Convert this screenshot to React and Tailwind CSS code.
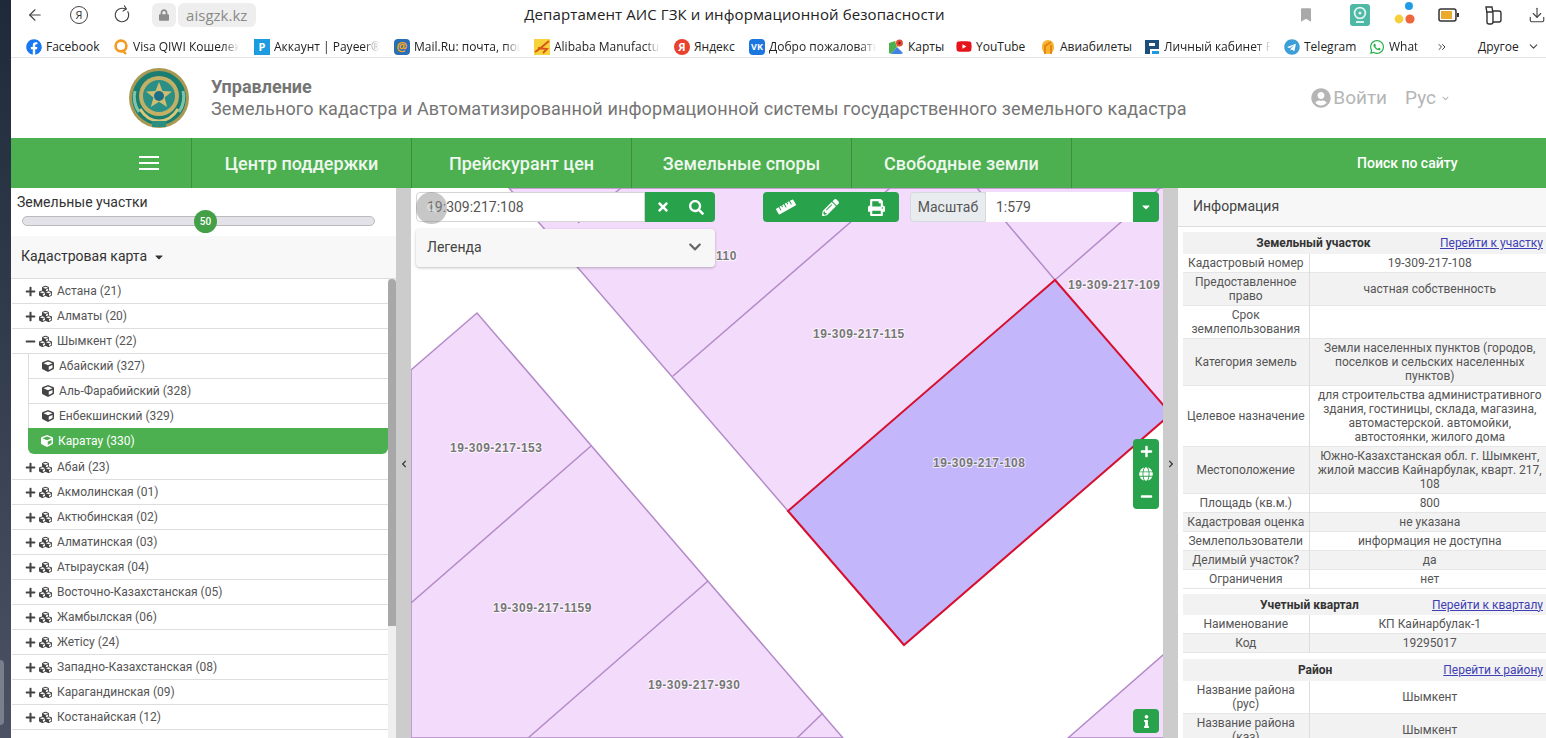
import { ArrowLeft, RotateCw, Download, ChevronDown, ChevronsRight } from "lucide-react";
import {
  FaPlus, FaMinus, FaCubes, FaCube, FaTimes, FaSearch, FaRuler, FaPencilAlt, FaPrint,
  FaCaretDown, FaGlobe, FaInfo, FaChevronLeft, FaChevronRight, FaChevronDown, FaUserCircle,
  FaLock, FaBookmark, FaFacebook, FaTelegram, FaWhatsapp, FaYoutube,
} from "react-icons/fa";

const bookmarks = [
  { label: "Facebook", w: 87, textW: 58, icon: "fb" },
  { label: "Visa QIWI Кошелек", w: 141, textW: 106, icon: "qiwi", fade: true },
  { label: "Аккаунт | Payeer®", w: 140, textW: 106, icon: "payeer", fade: true },
  { label: "Mail.Ru: почта, поиск", w: 140, textW: 106, icon: "mail", fade: true },
  { label: "Alibaba Manufacturer", w: 140, textW: 106, icon: "ali", fade: true },
  { label: "Яндекс", w: 75, textW: 44, icon: "ya" },
  { label: "Добро пожаловать", w: 139, textW: 107, icon: "vk", fade: true },
  { label: "Карты", w: 68, textW: 40, icon: "maps" },
  { label: "YouTube", w: 84, textW: 52, icon: "yt" },
  { label: "Авиабилеты", w: 104, textW: 76, icon: "avia" },
  { label: "Личный кабинет Payeer", w: 140, textW: 107, icon: "lk", fade: true },
  { label: "Telegram", w: 85, textW: 54, icon: "tg" },
  { label: "WhatsApp", w: 60, textW: 31, icon: "wa", fade: true },
];

const regions1 = ["Астана (21)", "Алматы (20)"];
const shymkentKids = ["Абайский (327)", "Аль-Фарабийский (328)", "Енбекшинский (329)"];
const regions2 = [
  "Абай (23)", "Акмолинская (01)", "Актюбинская (02)", "Алматинская (03)", "Атырауская (04)",
  "Восточно-Казахстанская (05)", "Жамбылская (06)", "Жетісу (24)", "Западно-Казахстанская (08)",
  "Карагандинская (09)", "Костанайская (12)",
];

const parcelRows = [
  ["Кадастровый номер", "19-309-217-108"],
  ["Предоставленное право", "частная собственность"],
  ["Срок землепользования", ""],
  ["Категория земель", "Земли населенных пунктов (городов, поселков и сельских населенных пунктов)"],
  ["Целевое назначение", "для строительства административного здания, гостиницы, склада, магазина, автомастерской. автомойки, автостоянки, жилого дома"],
  ["Местоположение", "Южно-Казахстанская обл. г. Шымкент, жилой массив Кайнарбулак, кварт. 217, 108"],
  ["Площадь (кв.м.)", "800"],
  ["Кадастровая оценка", "не указана"],
  ["Землепользователи", "информация не доступна"],
  ["Делимый участок?", "да"],
  ["Ограничения", "нет"],
];

const mapLabels = [
  ["110", 716, 260],
  ["19-309-217-109", 1068, 289],
  ["19-309-217-115", 813, 338],
  ["19-309-217-153", 450, 452],
  ["19-309-217-108", 933, 467],
  ["19-309-217-1159", 493, 612],
  ["19-309-217-930", 648, 689],
];

const Favicon = ({ type }) => {
  if (type === "fb") return <FaFacebook className="w-4 h-4 text-[#1877f2]" />;
  if (type === "yt") return <FaYoutube className="w-[17px] h-[17px] text-[#e5141b]" />;
  if (type === "tg") return <FaTelegram className="w-4 h-4 text-[#3c9fd8]" />;
  if (type === "wa") return <FaWhatsapp className="w-4 h-4 text-[#25b04a]" />;
  if (type === "qiwi")
    return (
      <svg viewBox="0 0 16 16" className="w-4 h-4">
        <circle cx="8" cy="7" r="5.4" fill="none" stroke="#f39a1f" strokeWidth="2.6" />
        <path d="M9 11l4 4" stroke="#f39a1f" strokeWidth="2.4" />
      </svg>
    );
  if (type === "payeer")
    return <span className="w-4 h-4 bg-[#1d9be0] text-white text-[11px] leading-4 font-bold text-center">P</span>;
  if (type === "mail")
    return <span className="w-4 h-4 rounded-sm bg-[#2a6fb5] text-[#f5a623] text-[12px] leading-[15px] font-bold text-center">@</span>;
  if (type === "ali")
    return (
      <svg viewBox="0 0 16 16" className="w-4 h-4">
        <rect width="16" height="16" fill="#f7d23a" />
        <path d="M1 13C6 10 10 6 15 2M4 9l9 1-4 4" fill="none" stroke="#d8531a" strokeWidth="1.8" />
      </svg>
    );
  if (type === "ya")
    return <span className="w-4 h-4 rounded-full bg-[#e8412d] text-white text-[11px] leading-4 font-bold text-center">Я</span>;
  if (type === "vk")
    return <span className="w-4 h-4 rounded-[4px] bg-[#1c76e0] text-white text-[9px] leading-4 font-bold text-center">VK</span>;
  if (type === "maps")
    return (
      <svg viewBox="0 0 16 16" className="w-4 h-4">
        <path d="M1 4l6-2 2 6-6 7-2-1z" fill="#4caf50" />
        <path d="M3 15l6-7 6 6-2 1z" fill="#3f84e5" />
        <path d="M7 2l5 0 3 4-6 2z" fill="#f5c33b" />
        <circle cx="11.5" cy="4" r="3.4" fill="#e0483a" />
        <circle cx="11.5" cy="4" r="1.2" fill="#8e1f17" />
      </svg>
    );
  if (type === "avia")
    return (
      <svg viewBox="0 0 16 16" className="w-4 h-4">
        <rect x="2" y="1" width="12" height="14" rx="6" fill="#f7b52c" />
        <path d="M5 15V7l6-4M11 15V6" stroke="#e57f18" strokeWidth="1.8" fill="none" />
      </svg>
    );
  if (type === "lk")
    return (
      <svg viewBox="0 0 16 16" className="w-4 h-4">
        <path d="M1 1h14v9H6v5H1z" fill="#1d4f7c" />
        <rect x="5" y="4" width="6" height="3" fill="#fff" />
        <rect x="8" y="12" width="7" height="3" fill="#1d9be0" />
      </svg>
    );
  return null;
};

const BrowserBar = () => (
  <div className="bg-white text-[#333]">
    <div className="flex items-center h-[29px]">
      <ArrowLeft className="ml-[15px] w-[18px] h-[18px] text-[#444]" strokeWidth={1.5} />
      <span className="ml-[26px] w-[18px] h-[18px] rounded-full border border-[#444] text-[11px] leading-[16px] text-center [font-family:'Open_Sans',sans-serif]">Я</span>
      <RotateCw className="ml-[25px] w-[18px] h-[18px] text-[#444] -rotate-[30deg]" strokeWidth={1.5} />
      <span className="ml-[21px] w-[24px] h-[24px] rounded-md bg-[#eeeeee] flex items-center justify-center">
        <FaLock className="w-[10px] h-[12px] text-[#8c8c8c]" />
      </span>
      <span className="ml-[2px] w-[78px] h-[24px] rounded-md bg-[#eeeeee] text-[#8a8a8a] text-[15px] leading-[24px] text-center [font-family:'Open_Sans',sans-serif]">aisgzk.kz</span>
      <span className="w-[960px] text-center text-[15px] tracking-[0.1px] text-[#222] [font-family:'Open_Sans',sans-serif] whitespace-nowrap">Департамент АИС ГЗК и информационной безопасности</span>
      <FaBookmark className="ml-[88px] w-[10px] h-[14px] text-[#a9a9a9]" />
      <svg viewBox="0 0 20 22" className="ml-[39px] w-[20px] h-[22px]">
        <rect width="20" height="22" rx="3" fill="#4db8a4" />
        <circle cx="10" cy="9" r="5.4" fill="none" stroke="#dff3ef" strokeWidth="1.8" />
        <circle cx="10" cy="9" r="1.6" fill="#dff3ef" />
        <rect x="6" y="17" width="8" height="2" fill="#dff3ef" />
      </svg>
      <svg viewBox="0 0 22 30" className="ml-[24px] w-[22px] h-[30px]">
        <circle cx="15" cy="6" r="4" fill="#1f9be8" />
        <circle cx="5" cy="19" r="4.4" fill="#f5cf3c" />
        <circle cx="16" cy="19" r="4.6" fill="#f0653a" />
      </svg>
      <svg viewBox="0 0 22 14" className="ml-[22px] w-[22px] h-[14px]">
        <rect x="1" y="1" width="17" height="12" rx="2" fill="#fff" stroke="#333" strokeWidth="1.5" />
        <rect x="3" y="3" width="11" height="8" fill="#eba92d" />
        <rect x="19" y="5" width="2" height="4" fill="#333" />
      </svg>
      <svg viewBox="0 0 20 22" fill="none" stroke="#333" strokeWidth="1.4" className="ml-[23px] w-[20px] h-[22px]">
        <path d="M3 3h6l1 6v9a2 2 0 01-2 2H6a2 2 0 01-2-2V9z" />
        <path d="M10 7h6a2 2 0 012 2v7a2 2 0 01-2 2h-6M3 8h7" />
      </svg>
      <Download className="ml-[25px] w-[18px] h-[18px] shrink-0 text-[#444]" strokeWidth={1.5} />
    </div>
    <div className="flex items-center h-[29px] pt-[7px] border-b border-[#e3e3e3] pl-[15px] text-[12px] text-[#222] [font-family:'Open_Sans',sans-serif]">
      {bookmarks.map((b) => (
        <div key={b.label} className="flex items-center shrink-0 gap-[4px]" style={{ width: b.w }}>
          <span className="w-4 h-4 flex items-center justify-center shrink-0"><Favicon type={b.icon} /></span>
          <span
            className={`overflow-hidden whitespace-nowrap ${b.fade ? "[mask-image:linear-gradient(to_right,black_85%,transparent)]" : ""}`}
            style={{ width: b.textW }}
          >
            {b.label}
          </span>
        </div>
      ))}
      <ChevronsRight className="ml-[7px] w-[12px] h-[12px] text-[#444]" />
      <span className="ml-[30px]">Другое</span>
      <ChevronDown className="ml-[8px] w-[13px] h-[13px] text-[#444]" />
    </div>
  </div>
);

const Emblem = () => (
  <svg viewBox="0 0 62 62" className="w-[62px] h-[62px] shrink-0">
    <circle cx="31" cy="31" r="30" fill="#a89a55" />
    <circle cx="31" cy="31" r="27" fill="#1a7d72" />
    <circle cx="31" cy="29" r="20" fill="#c2b066" />
    <circle cx="31" cy="29" r="16" fill="#2b8f86" />
    <path d="M31 15l3.5 9 9.5.6-7.4 6 2.5 9.4-8.1-5.3-8.1 5.3 2.5-9.4-7.4-6 9.5-.6z" fill="#cfbd72" />
    <circle cx="31" cy="29" r="5" fill="#1d6f87" />
    <path d="M12 42c5 8 12 12 19 12s14-4 19-12" fill="none" stroke="#d9c77a" strokeWidth="3" />
    <path d="M7 24c-2 8 0 15 4 21M55 24c2 8 0 15-4 21" fill="none" stroke="#7fc4a9" strokeWidth="3" />
    <rect x="24" y="54" width="14" height="6" fill="#2a8f80" />
  </svg>
);

const SiteHeader = () => (
  <div className="flex items-center h-[80px] bg-white pl-[117px] pr-[97px] text-[#757575]">
    <Emblem />
    <div className="ml-[21px] text-[18px] leading-[22px] whitespace-nowrap">
      <div className="font-bold">Управление</div>
      <div className="tracking-[0.11px]">Земельного кадастра и Автоматизированной информационной системы государственного земельного кадастра</div>
    </div>
    <div className="ml-auto flex items-center text-[19px] text-[#b5b5b5]">
      <FaUserCircle className="w-[20px] h-[20px] mr-[2px]" />
      <span>Войти</span>
      <span className="ml-[18px]">Рус</span>
      <FaChevronDown className="ml-[6px] w-[7px] h-[7px]" />
    </div>
  </div>
);

const NavBar = () => (
  <div className="flex h-[50px] bg-[#4caf50] text-[#eef7ee] text-[18px] font-medium">
    <div className="w-[181px] border-r border-[#3b8e3f] flex items-center pl-[128px]">
      <div className="w-[20px] flex flex-col gap-[4px]">
        <span className="h-[2px] bg-white" />
        <span className="h-[2px] bg-white" />
        <span className="h-[2px] bg-white" />
      </div>
    </div>
    {["Центр поддержки", "Прейскурант цен", "Земельные споры", "Свободные земли"].map((t) => (
      <div key={t} className="w-[220px] border-r border-[#3b8e3f] flex items-center justify-center">{t}</div>
    ))}
    <div className="flex items-center ml-[285px] text-[14px] text-white">Поиск по сайту</div>
  </div>
);

const TreeRoot = ({ label, open }) => (
  <div className="flex items-center h-[25px] border-b border-[#dddddd] pl-[13px] text-[12px] text-[#555]">
    {open ? <FaMinus className="w-[11px] h-[11px] text-[#444]" /> : <FaPlus className="w-[11px] h-[11px] text-[#444]" />}
    <FaCubes className="ml-[3px] w-[13px] h-[13px] text-[#444]" />
    <span className="ml-[5px]">{label}</span>
  </div>
);

const TreeChild = ({ label, active }) => (
  <div className={`ml-[16px] flex items-center pl-[13px] text-[12px] ${active ? "h-[26px] pb-px -mt-px mb-px bg-[#4caf50] text-white rounded-b-md" : "h-[25px] border-b border-l border-[#dddddd] text-[#555]"}`}>
    <FaCube className={`w-[12px] h-[12px] ${active ? "text-white" : "text-[#444]"}`} />
    <span className="ml-[5px]">{label}</span>
  </div>
);

const LeftPanel = () => (
  <div className="w-[385px] shrink-0 flex flex-col bg-white">
    <div className="h-[48px] px-[6px] text-[14px] leading-[16px] text-[#333] pt-[6px]">
      <div>Земельные участки</div>
      <div className="relative mt-[6px] ml-[5px] w-[353px] h-[10px] rounded-full bg-[#e2e2e8] border border-[#bbbbbb]">
        <span className="absolute left-[171px] -top-[7px] w-[23px] h-[23px] rounded-full bg-[#43a047] text-white text-[10px] leading-[23px] text-center font-medium">50</span>
      </div>
    </div>
    <div className="h-[43px] pb-px bg-[#f8f8f8] border-b border-[#dddddd] flex items-center pl-[10px] text-[14px] text-[#333]">
      Кадастровая карта
      <FaCaretDown className="ml-[6px] w-[12px] h-[12px]" />
    </div>
    <div className="flex flex-1 min-h-0 overflow-hidden">
      <div className="ml-px w-[376px] bg-white">
        {regions1.map((r) => <TreeRoot key={r} label={r} />)}
        <TreeRoot label="Шымкент (22)" open />
        {shymkentKids.map((r) => <TreeChild key={r} label={r} />)}
        <TreeChild label="Каратау (330)" active />
        {regions2.map((r) => <TreeRoot key={r} label={r} />)}
        <div className="h-[25px] border-b border-[#dddddd]" />
      </div>
      <div className="w-[8px] bg-[#efefef]">
        <div className="h-[347px] bg-[#a8a8a8] rounded-t" />
      </div>
    </div>
  </div>
);

const Gutter = ({ right }) => (
  <div className="w-[15px] shrink-0 bg-[#cccccc] flex items-center justify-center pt-[2px] relative">
    {right ? <FaChevronRight className="w-[8px] h-[8px] text-[#333]" /> : <FaChevronLeft className="w-[8px] h-[8px] text-[#333]" />}
  </div>
);

const MapCanvas = () => (
  <svg viewBox="411 188 752 550" className="absolute inset-0 w-[752px] h-[550px]">
    <g fill="#f3dbfb" stroke="#b48bc9" strokeWidth="1.5">
      <polygon points="509,188 1175,188 1175,412 1000,400 788,511" />
      <polygon points="411,370 477,313 843,738 411,738" />
      <polygon points="1068,738 1163,655 1175,655 1175,738" />
      <path fill="none" d="M673,376 L890,188 M977,188 L1055,280 L1160,188 M578,223 L621,188 M591,446 L411,603 M708,581 L528,738 M823,713 L797,738" />
    </g>
    <polygon points="1055,280 1171,414 904,645 788,511" fill="#c3b6fb" stroke="#d8102f" strokeWidth="2" />
    {mapLabels.map(([t, x, y]) => (
      <text key={t} x={x} y={y} fontFamily="Liberation Sans" fontWeight="700" fontSize="12" letterSpacing="0.5" fill="#777777" stroke="#ffffff" strokeOpacity="0.7" strokeWidth="2" paintOrder="stroke">{t}</text>
    ))}
  </svg>
);

const MapPanel = () => (
  <div className="relative w-[752px] shrink-0 overflow-hidden bg-white">
    <MapCanvas />
    <div className="absolute left-[5px] top-[4px] flex h-[30px] text-[14px] text-[#555]">
      <div className="w-[229px] bg-white border border-[#d5d5d5] rounded-l pl-[10px] leading-[28px]">19:309:217:108</div>
      <div className="w-[70px] bg-[#28a24b] rounded-r flex items-center text-white">
        <FaTimes className="ml-[12px] w-[12px] h-[14px]" />
        <FaSearch className="ml-[20px] w-[15px] h-[15px]" />
      </div>
      <div className="ml-[48px] w-[136px] bg-[#28a24b] rounded flex items-center text-white">
        <FaRuler className="ml-[13px] w-[20px] h-[20px]" />
        <FaPencilAlt className="ml-[26px] w-[17px] h-[17px]" />
        <FaPrint className="ml-[29px] w-[17px] h-[17px]" />
      </div>
      <div className="ml-[11px] w-[76px] bg-[#e9ecef] border border-[#d5d8dc] rounded-l leading-[28px] text-center">Масштаб</div>
      <div className="w-[147px] bg-white pl-[10px] leading-[30px]">1:579</div>
      <div className="w-[26px] bg-[#28a24b] rounded-r flex items-center justify-center text-white">
        <FaCaretDown className="w-[12px] h-[12px]" />
      </div>
    </div>
    <div className="absolute left-[5px] top-[4px] w-[31px] h-[32px] rounded-full bg-[#8f8f8f]/50 flex items-center justify-center">
      <FaSearch className="w-[10px] h-[10px] text-white/40" />
    </div>
    <div className="absolute left-[5px] top-[41px] w-[299px] h-[38px] pb-[2px] bg-[#f7f7f7] rounded shadow-[0_1px_3px_rgba(0,0,0,0.25)] flex items-center justify-between pl-[11px] pr-[13px] text-[14px] text-[#444]">
      Легенда
      <FaChevronDown className="w-[14px] h-[14px] text-[#666]" />
    </div>
    <div className="absolute left-[722px] top-[251px] w-[26px] h-[70px] bg-[#28a24b] rounded flex flex-col items-center justify-between py-[6px] text-white">
      <FaPlus className="w-[13px] h-[13px]" />
      <FaGlobe className="w-[14px] h-[14px]" />
      <FaMinus className="w-[13px] h-[13px]" />
    </div>
    <div className="absolute left-[722px] top-[521px] w-[26px] h-[24px] bg-[#28a24b] rounded flex items-center justify-center text-white">
      <FaInfo className="w-[11px] h-[13px]" />
    </div>
  </div>
);

const InfoTable = ({ title, link, rows, headH, className }) => (
  <table className={`table-fixed w-[367px] text-[12px] leading-[14px] text-[#555] text-center border-collapse ${className || ""}`}>
    <colgroup>
      <col className="w-[126px]" />
      <col />
    </colgroup>
    <thead>
      <tr className="bg-[#f2f2f2]">
        <th colSpan={2} className="p-0 font-bold text-[#333]" style={{ height: headH }}>
          <div className="flex items-center pr-[7px]">
            <span className="flex-1 text-center pl-[4px]">{title}</span>
            <a href="#" className="font-normal text-[#3f3fb5] underline">{link}</a>
          </div>
        </th>
      </tr>
    </thead>
    <tbody>
      {rows.map(([k, v], i) => (
        <tr key={k} className={`border-b border-[#e6e6e6] ${i % 2 ? "bg-[#f2f2f2]" : "bg-white"}`}>
          <td className="px-px pt-[2px] pb-[2px] border-r border-[#dddddd]">{k}</td>
          <td className="px-[4px] pt-[2px] pb-[2px]">{v}</td>
        </tr>
      ))}
    </tbody>
  </table>
);

const RightPanel = () => (
  <div className="flex-1 min-w-0 bg-white overflow-hidden">
    <div className="h-[39px] pb-[2px] bg-[#f7f7f7] border-b border-[#dddddd] flex items-center pl-[15px] text-[14px] text-[#444]">Информация</div>
    <div className="pl-[5px] pt-[5px] flex flex-col">
      <InfoTable headH={22} title="Земельный участок" link="Перейти к участку" rows={parcelRows} />
      <InfoTable headH={21} className="mt-[5px]" title="Учетный квартал" link="Перейти к кварталу" rows={[["Наименование", "КП Кайнарбулак-1"], ["Код", "19295017"]]} />
      <InfoTable headH={22} className="mt-[6px]" title="Район" link="Перейти к району" rows={[["Название района (рус)", "Шымкент"], ["Название района (каз)", "Шымкент"]]} />
    </div>
  </div>
);

export default function App() {
  return (
    <div className="flex w-[1546px] h-[738px] overflow-hidden bg-white [font-family:Roboto,sans-serif]">
      <div className="w-[11px] shrink-0 bg-gradient-to-b from-[#1e2a3a] to-[#4c5263] flex items-end pb-[13px]">
        <div className="w-[4px] h-[65px] bg-[#7a7f8c] rounded-r" />
      </div>
      <div className="flex-1 min-w-0 flex flex-col">
        <BrowserBar />
        <SiteHeader />
        <NavBar />
        <div className="flex flex-1 min-h-0">
          <LeftPanel />
          <Gutter />
          <MapPanel />
          <Gutter right />
          <RightPanel />
        </div>
      </div>
    </div>
  );
}
